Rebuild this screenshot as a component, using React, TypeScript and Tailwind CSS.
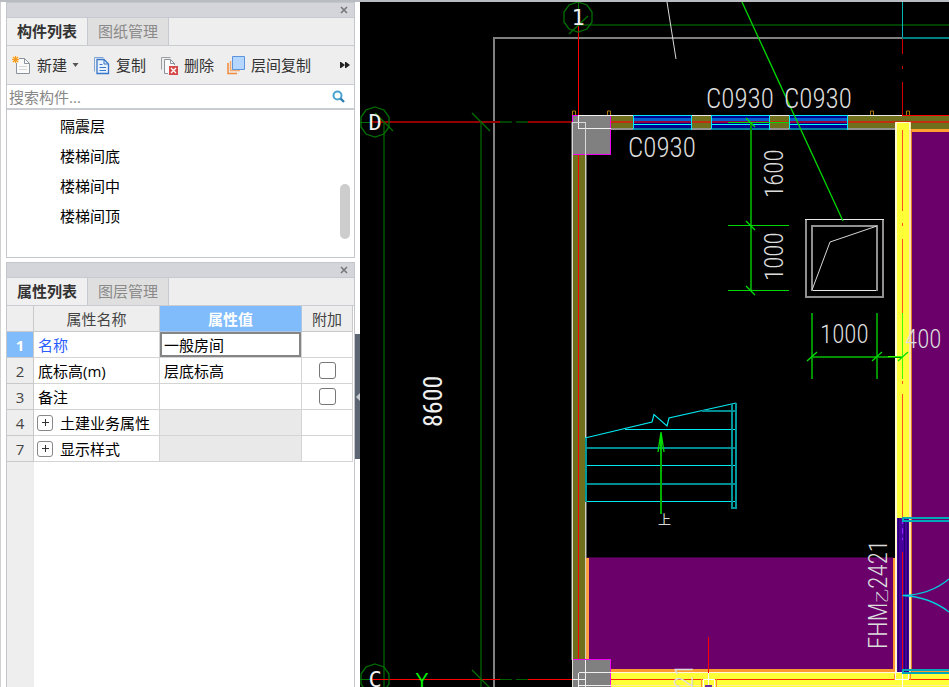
import type { ReactNode } from "react";
import { useState } from "react";
import clsx from "clsx";

const components = ["隔震层", "楼梯间底", "楼梯间中", "楼梯间顶"];

type Property = {
  row: number;
  name: string;
  value?: string;
  // can be attached to component name
  attach?: boolean;
  // collapsed group of properties
  group?: boolean;
};

const properties: Property[] = [
  { row: 1, name: "名称", value: "一般房间" },
  { row: 2, name: "底标高(m)", value: "层底标高", attach: true },
  { row: 3, name: "备注", value: "", attach: true },
  { row: 4, name: "土建业务属性", group: true },
  { row: 7, name: "显示样式", group: true },
];

export default function App() {
  return (
    <div className="flex h-screen flex-col overflow-hidden bg-white font-['Open_Sans','Noto_Sans_CJK_SC',sans-serif] text-[15px] leading-5 text-[#222]">
      <div className="h-[2px] shrink-0 bg-[#b9bdc2]" />
      <div className="flex min-h-0 grow">
        <aside className="flex w-[360px] shrink-0 border-l border-[#d0d0d0] pl-[5px]">
          <div className="flex min-w-0 grow flex-col gap-1">
            <ComponentPanel />
            <PropertyPanel />
          </div>
          <div className="w-[5px] shrink-0 pt-[332px]">
            <button
              className="grid h-[125px] w-full place-items-center bg-[#5c6672]"
              aria-label="收起"
            >
              <svg viewBox="0 0 4 8" className="h-2 w-1 fill-[#c5cad0]">
                <path d="M4 0v8L0 4z" />
              </svg>
            </button>
          </div>
        </aside>
        <main className="min-w-0 grow bg-black">
          <Drawing />
        </main>
      </div>
    </div>
  );
}

function PanelHeader({ tabs }: { tabs: string[] }) {
  const [active, setActive] = useState(0);

  return (
    <>
      <div className="flex h-[15px] shrink-0 items-center justify-end border-b border-[#c6c9cf] bg-[#d3d5db] pr-[6px]">
        <button aria-label="关闭">
          <svg
            viewBox="0 0 8 8"
            className="size-2 stroke-[#777] stroke-[1.6]"
          >
            <path d="M1 1l6 6M7 1l-6 6" />
          </svg>
        </button>
      </div>
      <div className="flex h-7 shrink-0 border-b border-[#c9ccd1] bg-[#eeeeee]">
        {tabs.map((tab, index) => (
          <button
            key={tab}
            onClick={() => setActive(index)}
            className={clsx(
              "w-[81px] border-r border-[#c6c9cf] pb-[2px] text-center whitespace-nowrap",
              active === index
                ? "bg-[#f0f0f0] font-bold text-[#333]"
                : "bg-[#dfdfdf] text-[#8a8a8a]",
            )}
          >
            {tab}
          </button>
        ))}
      </div>
    </>
  );
}

function ToolButton({ icon, label }: { icon: ReactNode; label: string }) {
  return (
    <button className="flex items-center gap-[6px] whitespace-nowrap text-[#333]">
      {icon}
      {label}
    </button>
  );
}

function ComponentPanel() {
  return (
    <section className="flex shrink-0 flex-col border border-[#c3c6ca]">
      <PanelHeader tabs={["构件列表", "图纸管理"]} />

      {/* toolbar */}
      <div className="flex h-[39px] items-center border-b border-[#c9ccd1] bg-[#eeeeee] pr-1 pl-[5px]">
        <ToolButton icon={<NewIcon />} label="新建" />
        <svg viewBox="0 0 6 4" className="mr-[14px] ml-[5px] h-1 w-[7px]">
          <path d="M0 0h6L3 4z" fill="#555" />
        </svg>
        <ToolButton icon={<CopyIcon />} label="复制" />
        <div className="w-[14px]" />
        <ToolButton icon={<DeleteIcon />} label="删除" />
        <div className="w-[13px]" />
        <ToolButton icon={<FloorCopyIcon />} label="层间复制" />
        <button className="ml-auto" aria-label="更多">
          <svg viewBox="0 0 10 8" className="h-2 w-[10px] fill-[#222]">
            <path d="M0 1h1l4 3-4 3H0zM5 1h1l4 3-4 3H5z" />
          </svg>
        </button>
      </div>

      {/* search */}
      <label className="flex h-[23px] items-center bg-white pr-[9px] pl-[2px]">
        <input
          className="min-w-0 grow outline-none placeholder:text-[#888]"
          placeholder="搜索构件..."
          aria-label="搜索构件"
        />
        <svg viewBox="0 0 13 13" className="size-[13px]" fill="none">
          <circle cx="5.500" cy="5.500" r="4" stroke="#4aa3cf" strokeWidth="2" />
          <path d="M8.500 8.500l3.500 3.500" stroke="#2b7fb0" strokeWidth="2.400" />
        </svg>
      </label>

      {/* component list */}
      <div className="flex h-[149px] items-end justify-between border-t-2 border-[#c9ccd1] bg-white pr-1">
        <ul className="self-start pt-px pl-[53px] text-black">
          {components.map((name) => (
            <li key={name} className="h-[30px] leading-[30px]">
              {name}
            </li>
          ))}
        </ul>
        <div className="mb-[18px] h-[55px] w-[10px] rounded-full bg-[#cdcdcd]" />
      </div>
    </section>
  );
}

function PropertyPanel() {
  return (
    <section className="flex min-h-0 grow flex-col border-x border-t border-[#c3c6ca]">
      <PanelHeader tabs={["属性列表", "图层管理"]} />
      <table className="w-[346px] shrink-0 table-fixed border-separate border-spacing-0 text-black">
        <colgroup>
          <col className="w-[27px]" />
          <col className="w-[126px]" />
          <col className="w-[142px]" />
          <col className="w-[51px]" />
        </colgroup>
        <thead>
          <tr className="h-[26px] bg-[#eeeeee] text-[#444]">
            <th className="border-r border-b border-[#c9c9c9]" />
            <th className="border-r border-b border-[#c9c9c9] p-0 font-normal">
              属性名称
            </th>
            <th className="border-r border-b border-[#a9c4e4] bg-[#80bbfb] p-0 font-bold text-white">
              属性值
            </th>
            <th className="border-r border-b border-[#c9c9c9] p-0 font-normal">
              附加
            </th>
          </tr>
        </thead>
        <tbody>
          {properties.map(({ row, name, value, attach, group }) => (
            <tr key={row} className="h-[26px]">
              <th
                className={clsx(
                  "border-r border-b border-[#c9c9c9] p-0",
                  row === 1
                    ? "bg-[#80bbfb] font-bold text-white"
                    : "bg-[#eeeeee] font-normal text-[#444]",
                )}
              >
                {row}
              </th>
              <td
                className={clsx(
                  "border-r border-b border-[#d4d4d4] p-0 whitespace-nowrap",
                  group ? "pl-[3px]" : "pl-1",
                  row === 1 && "text-[#2a5cff]",
                )}
              >
                {group ? (
                  <div className="flex items-center gap-[7px]">
                    <button
                      className="grid size-4 place-items-center rounded-[3px] border border-[#888]"
                      aria-label={`展开${name}`}
                    >
                      <svg viewBox="0 0 7 7" className="size-[7px]">
                        <path d="M3 0h1v3h3v1H4v3H3V4H0V3h3z" fill="#333" />
                      </svg>
                    </button>
                    {name}
                  </div>
                ) : (
                  name
                )}
              </td>
              <td
                className={clsx(
                  "border-r border-b border-[#d4d4d4] p-0",
                  group && "bg-[#e9e9e9]",
                )}
              >
                {!group && (
                  <input
                    className={clsx(
                      "block h-[25px] w-full outline-none",
                      row === 1 ? "border-2 border-[#858585] pl-[2px]" : "pl-1",
                    )}
                    defaultValue={value}
                    aria-label={name}
                  />
                )}
              </td>
              <td className="border-r border-b border-[#d4d4d4] p-0">
                {attach && (
                  <input
                    type="checkbox"
                    className="mx-auto block size-[17px] appearance-none rounded-[3px] border border-[#777] bg-white checked:bg-[#80bbfb]"
                    aria-label={`附加${name}`}
                  />
                )}
              </td>
            </tr>
          ))}
        </tbody>
      </table>
      <div className="w-[27px] grow bg-[#eeeeee]" />
    </section>
  );
}

function NewIcon() {
  return (
    <svg viewBox="0 0 19 19" className="size-[19px]" fill="none">
      <path d="M4.500 2.500h8l5 5v10h-13z" fill="#fafafa" stroke="#8b949c" />
      <path d="M12.500 2.500v5h5" stroke="#8b949c" />
      <path d="M7 10.500h8M7 13.500h8" stroke="#d5d5d5" />
      <path d="M0 0h7v7H0z" fill="#fff0d5" />
      <path
        d="M3.500 0v7M0 3.500h7M1 1l5 5M6 1L1 6"
        stroke="#f59a23"
        strokeWidth="1.200"
      />
    </svg>
  );
}

function CopyIcon() {
  return (
    <svg viewBox="0 0 17 19" className="h-[19px] w-[17px]" fill="none">
      <path d="M1.500 15.500v-14h9" stroke="#7fa6d8" />
      <path
        d="M4 3.500h7l4.500 4.500v9.500H4z"
        fill="#e9f2ff"
        stroke="#3978c8"
        strokeWidth="1.300"
      />
      <path d="M11 3.500v4.500h4" stroke="#3978c8" />
      <path d="M6.500 8.500h3M6.500 11.500h6.500M6.500 14.500h6.500" stroke="#3978c8" />
    </svg>
  );
}

function DeleteIcon() {
  return (
    <svg viewBox="0 0 18 19" className="h-[19px] w-[18px]" fill="none">
      <path d="M1.500 13.500v-12h9" stroke="#9aa0a6" />
      <path d="M8 17.500H4.500v-14h6l4 4V9" fill="#fafafa" stroke="#8b949c" />
      <path d="M10.500 3.500v4h4" stroke="#8b949c" />
      <path d="M9 10h9v9H9z" fill="#d54b4b" />
      <path d="M11 12l5 5M16 12l-5 5" stroke="#fff" strokeWidth="1.300" />
    </svg>
  );
}

function FloorCopyIcon() {
  return (
    <svg viewBox="0 0 18 19" className="h-[19px] w-[18px]" fill="none">
      <path d="M1 7v10.500h9" stroke="#f08a3c" strokeWidth="1.500" />
      <path d="M3.500 5v9.500H13" stroke="#f5a96b" strokeWidth="1.500" />
      <path d="M5.500 .500h12v13h-12z" fill="#b5d6ff" stroke="#5c94dd" />
    </svg>
  );
}

// window openings in top wall
const windows = [633, 711, 789];

// grid axis bubble
function Bubble({ x, y, label }: { x: number; y: number; label: string }) {
  return (
    <g>
      <path
        transform={`translate(${x} ${y})`}
        d="M0-15L9-12 14-5V5L9 12 0 15-9 12-14 5V-5L-9-12z"
        fill="none"
        stroke="#007000"
        strokeWidth="1.300"
      />
      <text
        x={x}
        y={y + 8}
        textAnchor="middle"
        className="fill-[#f0f0f0] font-['DejaVu_Sans_Mono',monospace] text-[22px]"
      >
        {label}
      </text>
    </g>
  );
}

function Label({
  x,
  y,
  vertical,
  end,
  className,
  children,
}: {
  x: number;
  y: number;
  vertical?: boolean;
  end?: boolean;
  className?: string;
  children: ReactNode;
}) {
  return (
    <text
      transform={`translate(${x} ${y}) rotate(${vertical ? -90 : 0})`}
      textAnchor={end ? "end" : "start"}
      className={className}
    >
      {children}
    </text>
  );
}

function Drawing() {
  return (
    <svg
      viewBox="360 2 589 685"
      preserveAspectRatio="xMinYMin slice"
      className="block size-full"
      fill="none"
      role="img"
      aria-label="平面图"
    >
      {/* axes and frame */}
      <g shapeRendering="crispEdges">
        <path
          d="M578 25H949M384 122V687M481 122V687"
          stroke="#004000"
          strokeWidth="2"
        />
        <path d="M494 687V38H902" stroke="#808080" strokeWidth="2" />
        <path d="M372 122H500M528 122H573" stroke="#900000" strokeWidth="2" />
        <path d="M500 122H512M516 122H528" stroke="#004000" strokeWidth="2" />
        <path d="M372 679.500H500M528 679.500H573" stroke="#ff0000" />
        <path d="M500 679.500H512M516 679.500H528" stroke="#006000" />
        <path d="M360 122.500H372M360 679.500H372M578.500 2V25" stroke="#007000" />
        <path d="M578.500 25V116" stroke="#ff0000" />
        <path d="M902.500 38V54M902.500 66V69M902.500 82V115" stroke="#d00000" />
        <path d="M902.500 2V38" stroke="#00b8b8" />
        <path d="M902 38H949" stroke="#008080" strokeWidth="2" />
      </g>
      <path
        d="M375 113l18 18M472 113l18 18M472 670l18 18M569 34l19-18"
        stroke="#007000"
        strokeWidth="1.300"
      />
      <Bubble x={375} y={122} label="D" />
      <Bubble x={375} y={679} label="C" />
      <Bubble x={578} y={17} label="1" />

      {/* rooms */}
      <g shapeRendering="crispEdges">
        <path d="M586 558H896V672H586zM911 130H949V672H911z" fill="#6b006b" />
        <path d="M586 557.500H893" stroke="#400040" />
        <path d="M587 558V660" stroke="#ffa040" strokeWidth="3" />
        <path d="M894 558V671M611 670.500H949" stroke="#ff9a30" strokeWidth="3" />
      </g>

      {/* top wall */}
      <g shapeRendering="crispEdges">
        <path d="M611 115H949V129H611z" fill="#70701c" />
        <path d="M611 122H949" stroke="#c03010" strokeWidth="2" />
        <path d="M611 115.500H902" stroke="#e8e8e8" />
        <path d="M611 129H897" stroke="#909090" strokeWidth="2" />
        <path d="M902 115.500H949" stroke="#ff0000" />
        <path d="M908 130H949" stroke="#ffa030" strokeWidth="3" />
        {windows.map((x) => (
          <g key={x}>
            <rect x={x} y={115} width={59} height={15} fill="#000090" />
            <rect x={x} y={118} width={59} height={3} fill="#0060d0" />
            <rect x={x} y={121} width={59} height={2} fill="#900040" />
            <rect x={x} y={124} width={59} height={1} fill="#00ffff" />
            <rect x={x} y={128} width={59} height={2} fill="#0080a0" />
            <path d={`M${x} 115.500h59m-.500 0v14M${x}.500 115v14`} stroke="#00e8ff" />
          </g>
        ))}
      </g>

      {/* left wall */}
      <g shapeRendering="crispEdges">
        <path d="M573 155H585V660H573z" fill="#70701c" />
        <path d="M572.500 122V687" stroke="#e0e0d0" />
        <path d="M585.500 122V660" stroke="#d0d0c0" />
        <path d="M571.500 122V660M586.500 122V558" stroke="#606060" />
        <path d="M578.500 155V660" stroke="#ff0000" />
      </g>

      {/* right wall */}
      <g shapeRendering="crispEdges">
        <path d="M896 122H910V518H896z" fill="#ffff38" />
        <path d="M896 122V672" stroke="#fff8d0" strokeWidth="2" />
        <path d="M910 122V672" stroke="#ffe0b0" strokeWidth="2" />
        <path d="M911.500 130V672" stroke="#e08020" />
        <path d="M909 122V130M896 122.500H910" stroke="#ffffd0" />
        <path
          d="M902.500 130V211M902.500 223V226M902.500 239V313M902.500 381V384M902.500 394V518"
          stroke="#ff5020"
        />
        {/* door */}
        <path d="M897 518H909V673H897z" fill="#48009c" />
        <path d="M898.500 518V672M904.500 518V672M907.500 518V672" stroke="#24006c" />
        <path d="M902.500 518V524M902.500 528V534M902.500 538V540" stroke="#9020ff" />
        <path d="M902.500 552V672" stroke="#ee0010" />
      </g>

      {/* bottom wall */}
      <g shapeRendering="crispEdges">
        <path d="M611 672H949V687H611z" fill="#ffff38" />
        <path d="M611 672.500H949" stroke="#fff8e0" />
        <path d="M611 679.500H949" stroke="#ff2a00" />
        <path d="M611 685.500H949" stroke="#ffe8a0" />
        <path d="M708.500 637V673" stroke="#ff0000" />
        <path
          d="M895.500 673V679.500H908.500V673M902.500 673V687M703 687V679.500H714V687M708.500 673V687"
          stroke="#ffffff"
        />
        <path d="M701 687V679M716 687V679M894 674V680M910 674V680" stroke="#ff9030" />
        <path d="M705 685H712V687H705z" fill="#7030a0" />
      </g>

      {/* columns */}
      <g shapeRendering="crispEdges">
        <path d="M573 115H611V155H573zM573 660H611V687H573z" fill="#808080" />
        <path
          d="M572.500 122V115.500H579M610.500 116V154.500H573M573 659.500H610.500V687"
          stroke="#f000f0"
        />
        <path d="M578.500 115V128.500H611M578.500 115.500H611" stroke="#f0f0f0" />
        <path d="M572.500 155V122.500H585.500V155" stroke="#d8d8d8" />
        <path
          d="M572 679.500H585M585.500 660V687M578.500 673V686.500M578.500 672.500H611M578.500 685.500H611"
          stroke="#f0f0f0"
        />
      </g>
      <path
        d="M572.500 115v-4h3v4M607.500 115v-4h3v4M870.500 115v-4h3v4M906.500 115v-4h3v4"
        stroke="#b07800"
      />

      {/* door swing */}
      <path
        d="M902.500 595.500Q930 595 949 579M902.500 595.500Q930 597 949 612"
        stroke="#00d0e0"
        strokeWidth="1.300"
      />
      <g shapeRendering="crispEdges" fill="#00a8b8">
        <path d="M902 517H949V519H904V520H949V522H902z" />
        <path d="M902 669H949V671H904V672H949V674H902z" />
      </g>

      {/* stairs */}
      <g stroke="#00e8f0">
        <path
          d="M585 438L652 422 654 414.500 667 426 669 418 736 403"
          strokeWidth="1.200"
        />
        <g shapeRendering="crispEdges">
          <path d="M625 429.500H736M585 465.500H736M585 501.500H736" />
          <path
            d="M702 411H736M585 447.500H736M585 483.500H736"
            stroke="#008c90"
            strokeWidth="2"
          />
          <path
            d="M732 404V508H736V403M585.500 438V502"
            stroke="#00989c"
            strokeWidth="2"
          />
        </g>
      </g>
      <path d="M661 514V434" stroke="#00b000" strokeWidth="2" />
      <path
        d="M658 452L661 432 664 452M661 432V450"
        stroke="#00e000"
        strokeWidth="1.300"
      />

      {/* shaft */}
      <g shapeRendering="crispEdges">
        <path d="M806 220V297H883V220" stroke="#909090" strokeWidth="2" />
        <path d="M805 219.500H884M812 290.500H877" stroke="#e8e8e8" />
        <path d="M812 291V226H877V291" stroke="#909090" strokeWidth="2" />
      </g>
      <path d="M812 290L830 242 877 226M667 2L676 59" stroke="#d8d8d8" />

      {/* dimensions */}
      <path d="M742 2L843 221" stroke="#00d800" strokeWidth="1.300" />
      <g shapeRendering="crispEdges">
        <path
          d="M751 122V291M812 313V379M877 313V379M812 357H903"
          stroke="#009000"
          strokeWidth="2"
        />
        <path
          d="M728 122.500H789M728 225.500H789M728 290.500H789"
          stroke="#00d800"
        />
        <path d="M902.500 313V379M888 356.500H903" stroke="#40ff00" />
      </g>
      <path
        d="M746 118l9 9M746 221l9 9M746 286l9 9M807 361l10-9M872 361l10-9M898 361l10-9"
        stroke="#00e000"
        strokeWidth="1.300"
      />

      {/* labels */}
      <g className="fill-[#dcdcdc] font-['Roboto_Condensed','Noto_Sans_CJK_SC',sans-serif] text-[25px] font-light">
        <Label x={706} y={108} className="text-[27px]">C0930</Label>
        <Label x={784} y={108} className="text-[27px]">C0930</Label>
        <Label x={628} y={157} className="text-[27px]">C0930</Label>
        <Label x={783} y={198} vertical>1600</Label>
        <Label x={783} y={281} vertical>1000</Label>
        <Label x={820} y={343}>1000</Label>
        <Label x={905} y={348}>400</Label>
        <Label x={887} y={649} vertical>
          FHM<tspan className="text-[14px]">乙</tspan>2421
        </Label>
        <Label x={693} y={664} vertical end>21</Label>
      </g>
      <text
        transform="translate(442 427) rotate(-90)"
        className="fill-[#f0f0f0] font-['Roboto_Condensed','Noto_Sans_CJK_SC',sans-serif] text-[26px]"
      >
        8600
      </text>
      <text
        x={658}
        y={524}
        className="fill-[#d8d8d8] font-['Noto_Sans_CJK_SC',sans-serif] text-[13px]"
      >
        上
      </text>
      <text
        x={422}
        y={687}
        textAnchor="middle"
        className="fill-[#00f000] font-['Liberation_Sans',sans-serif] text-[20px]"
      >
        Y
      </text>
    </svg>
  );
}
